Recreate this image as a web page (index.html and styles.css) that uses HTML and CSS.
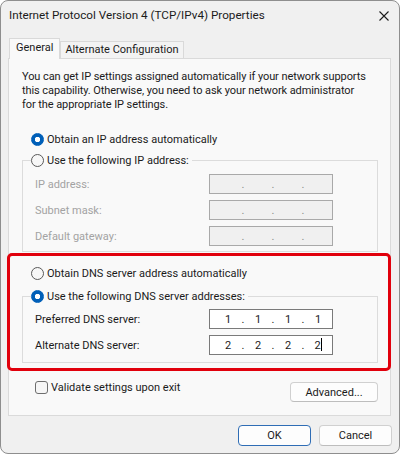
FILE: index.html
```html
<!DOCTYPE html>
<html lang="en">
<head>
    <meta charset="UTF-8">
    <meta name="viewport" content="width=device-width, initial-scale=1.0">
    <title>Internet Protocol Version 4 (TCP/IPv4) Properties</title>
    <link rel="stylesheet" href="styles.css">
</head>
<body>
    <div class="window">
        <div class="titlebar">
            <span class="title">Internet Protocol Version 4 (TCP/IPv4) Properties</span>
            <svg class="close" width="10" height="10" viewBox="0 0 10 10">
                <path d="M0.5 0.5 L9.5 9.5 M9.5 0.5 L0.5 9.5" stroke="#1b1b1b" stroke-width="1.1" fill="none"/>
            </svg>
        </div>

        <div class="tabs">
            <div class="tab active">General</div>
            <div class="tab">Alternate Configuration</div>
        </div>

        <div class="panel">
            <p class="intro">You can get IP settings assigned automatically if your network supports<br>this capability. Otherwise, you need to ask your network administrator<br>for the appropriate IP settings.</p>

            <label class="radio first"><input type="radio" name="ip" checked> Obtain an IP address automatically</label>

            <fieldset class="group">
                <legend><label class="radio"><input type="radio" name="ip"> Use the following IP address:</label></legend>
                <div class="field disabled">
                    <span class="field-label">IP address:</span>
                    <div class="ip"><span class="seg"></span><span class="dot">.</span><span class="seg"></span><span class="dot">.</span><span class="seg"></span><span class="dot">.</span><span class="seg"></span></div>
                </div>
                <div class="field disabled">
                    <span class="field-label">Subnet mask:</span>
                    <div class="ip"><span class="seg"></span><span class="dot">.</span><span class="seg"></span><span class="dot">.</span><span class="seg"></span><span class="dot">.</span><span class="seg"></span></div>
                </div>
                <div class="field disabled">
                    <span class="field-label">Default gateway:</span>
                    <div class="ip"><span class="seg"></span><span class="dot">.</span><span class="seg"></span><span class="dot">.</span><span class="seg"></span><span class="dot">.</span><span class="seg"></span></div>
                </div>
            </fieldset>

            <div class="highlight">
                <label class="radio"><input type="radio" name="dns"> Obtain DNS server address automatically</label>

                <fieldset class="group dns">
                    <legend><label class="radio"><input type="radio" name="dns" checked> Use the following DNS server addresses:</label></legend>
                    <div class="field">
                        <span class="field-label">Preferred DNS server:</span>
                        <div class="ip"><span class="seg">1</span><span class="dot">.</span><span class="seg">1</span><span class="dot">.</span><span class="seg">1</span><span class="dot">.</span><span class="seg">1</span></div>
                    </div>
                    <div class="field">
                        <span class="field-label">Alternate DNS server:</span>
                        <div class="ip"><span class="seg">2</span><span class="dot">.</span><span class="seg">2</span><span class="dot">.</span><span class="seg">2</span><span class="dot">.</span><span class="seg">2<span class="caret"></span></span></div>
                    </div>
                </fieldset>
            </div>

            <div class="options">
                <label class="check"><input type="checkbox"> Validate settings upon exit</label>
                <button class="btn advanced">Advanced...</button>
            </div>
        </div>

        <div class="footer">
            <button class="btn primary">OK</button>
            <button class="btn">Cancel</button>
        </div>
    </div>
</body>
</html>
```

FILE: styles.css
```css
* {
    margin: 0;
    padding: 0;
    box-sizing: border-box;
}

:root {
    --text: #1b1b1b;
    --muted: #a3a3a3;
    --accent: #005fb8;
    --window-bg: #f0f0f0;
    --page-bg: #f9f9f9;
    --line: #dcdcdc;
    --red: #e1000c;
}

body {
    background-color: #ffffff;
    font-family: Roboto, "Noto Sans", sans-serif;
    font-size: 11px;
    color: var(--text);
}

.window {
    width: 400px;
    height: 454px;
    background-color: var(--window-bg);
    border: 1px solid #8e8e8e;
    border-radius: 8px;
    overflow: hidden;
}

.titlebar {
    height: 37px;
    display: flex;
    justify-content: space-between;
    align-items: flex-start;
    padding: 6px 10px 0 8px;
}

.title {
    font-size: 11.7px;
    line-height: 16px;
}

.close {
    margin-top: 4px;
}

/* Tabs */
.tabs {
    height: 20px;
    display: flex;
    align-items: flex-end;
    padding-left: 8px;
}

.tab {
    height: 17px;
    line-height: 16px;
    padding: 0 4px;
    border: 1px solid #d9d9d9;
    border-bottom: none;
    background-color: #f3f3f3;
}

.tab.active {
    position: relative;
    height: 21px;
    margin-bottom: -1px;
    padding: 1px 6px 0 6px;
    background-color: var(--page-bg);
}

.panel {
    margin: 0 8px 0 7px;
    background-color: var(--page-bg);
    border: 1px solid #dadada;
    padding: 11px 12px 13px 13px;
}

.intro {
    line-height: 14px;
    white-space: nowrap;
    letter-spacing: -0.08px;
}

/* Radios and checkbox */
.radio {
    display: flex;
    align-items: center;
    gap: 3px;
    height: 16px;
    margin-left: 9px;
    white-space: nowrap;
}

.radio.first {
    margin-top: 19px;
}

.radio input {
    appearance: none;
    width: 13px;
    height: 13px;
    border: 1px solid #5a5a5a;
    border-radius: 50%;
    background-color: #f7f7f7;
    margin: 0;
}

.radio input:checked {
    border-color: var(--accent);
    background: radial-gradient(circle, #ffffff 0 2.4px, var(--accent) 3px);
}

.group {
    border: 1px solid var(--line);
    margin-top: 5px;
    padding: 6px 12px 5px 12px;
}

.group legend {
    margin-left: -4px;
    padding-right: 3px;
}

.group legend .radio {
    margin-left: 0;
}

.group.dns {
    margin-top: 7px;
    padding: 5px 12px 7px 12px;
}

.field {
    display: flex;
    align-items: center;
    height: 20px;
}

.field + .field {
    margin-top: 6px;
}

.field-label {
    width: 174px;
}

.ip {
    width: 124px;
    height: 20px;
    display: flex;
    align-items: center;
    padding-left: 10px;
    background-color: #ffffff;
    border: 1px solid #7a7a7a;
}

.seg {
    width: 16px;
    text-align: center;
}

.dot {
    width: 14px;
    text-align: center;
}

.caret {
    display: inline-block;
    width: 1px;
    height: 13px;
    background-color: #000000;
    vertical-align: -2px;
}

.field.disabled .field-label {
    color: var(--muted);
}

.field.disabled .ip {
    background-color: #f0f0f0;
    border-color: #a9a9a9;
    color: #8a8a8a;
}

/* Red highlight around DNS settings */
.highlight {
    margin: 1px -13px 0 -15px;
    border: 3px solid var(--red);
    border-radius: 5px;
    padding: 9px 10px 5px 12px;
}

.options {
    display: flex;
    justify-content: space-between;
    align-items: flex-start;
    margin-top: 9px;
}

.check {
    display: flex;
    align-items: center;
    gap: 3px;
    margin-left: 13px;
    height: 14px;
}

.check input {
    appearance: none;
    width: 13px;
    height: 13px;
    border: 1px solid #6e6e6e;
    border-radius: 3px;
    background-color: #f6f6f6;
    margin: 0;
}

.btn {
    width: 73px;
    height: 21px;
    font-family: inherit;
    font-size: 11px;
    color: var(--text);
    background-color: #fdfdfd;
    border: 1px solid #d0d0d0;
    border-bottom-color: #bdbdbd;
    border-radius: 4px;
}

.btn.advanced {
    width: 88px;
    height: 20px;
    margin-top: 2px;
}

.btn.primary {
    border: 1px solid #2f6db5;
}

.footer {
    display: flex;
    justify-content: flex-end;
    gap: 8px;
    padding: 9px 7px 0 0;
}
```
